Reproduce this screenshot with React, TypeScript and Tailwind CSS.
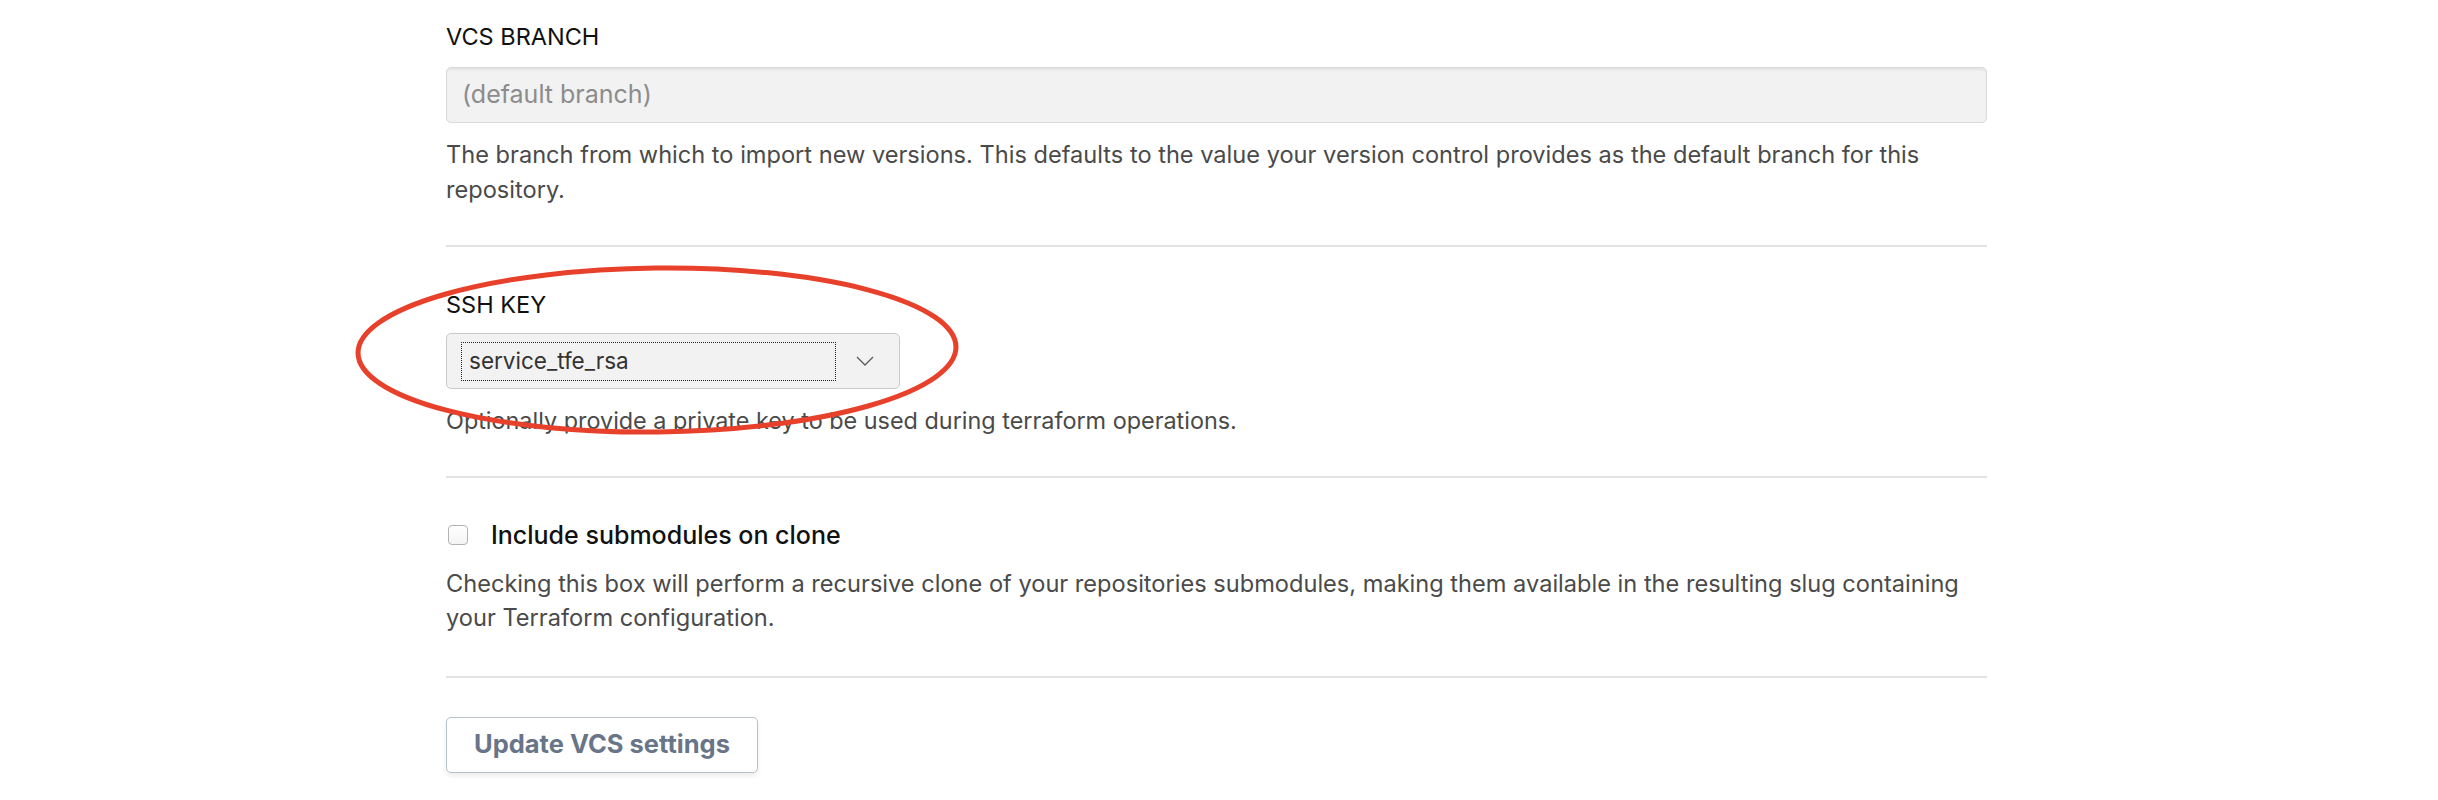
import React from 'react';

const font = { fontFamily: 'Inter, "Noto Sans", sans-serif' };

const Chevron = () => (
  <svg width="18" height="10" viewBox="0 0 18 10" fill="none">
    <path d="M1 1l8 8 8-8" stroke="#5a5a5a" strokeWidth="1.3" />
  </svg>
);

const App = () => {
  return (
    <div className="min-h-[800px] bg-white" style={font}>
      <div className="relative ml-[446px] w-[1541px]">
        {/* VCS branch */}
        <section className="pt-[21px] pb-[38px] border-b-2 border-[#e3e3e3]">
          <label className="block text-[23.5px] leading-[32px] text-[#111] uppercase mb-[14px]">VCS Branch</label>
          <div className="h-[56px] flex items-center px-[15px] bg-[#f2f2f2] border border-[#dadada] rounded-[5px] shadow-[inset_0_2px_2px_rgba(0,0,0,0.06)] text-[25px] text-[#8c8c8c]">
            (default branch)
          </div>
          <p className="mt-[15px] text-[23.6px] leading-[34.5px] text-[#4a4a4a]">
            The branch from which to import new versions. This defaults to the value your version control provides as the default branch for this repository.
          </p>
        </section>

        {/* SSH key */}
        <section className="pt-[42px] pb-[37px] border-b-2 border-[#e3e3e3]">
          <label className="block text-[23.5px] leading-[32px] text-[#111] uppercase mb-[12px]">SSH Key</label>
          <div className="w-[454px] h-[56px] flex items-center pl-[14px] pr-[25px] bg-[#f2f2f2] border border-[#c9c9c9] rounded-[5px]">
            <div className="w-[375px] h-[39px] flex items-center pl-[7px] border border-dotted border-[#222] text-[22.5px] text-[#333]">
              service_tfe_rsa
            </div>
            <div className="ml-auto flex items-center">
              <Chevron />
            </div>
          </div>
          <p className="mt-[15px] text-[23.4px] leading-[34.5px] text-[#4a4a4a]">
            Optionally provide a private key to be used during terraform operations.
          </p>
        </section>

        {/* Submodules */}
        <section className="pt-[41px] pb-[40px] border-b-2 border-[#e3e3e3]">
          <label className="flex items-center gap-[23px] text-[25px] leading-[32px] font-medium text-[#111]">
            <span className="ml-[2px] w-[20px] h-[20px] rounded-[4px] border border-[#b3b3b3] bg-gradient-to-b from-white to-[#f4f4f4]" />
            Include submodules on clone
          </label>
          <p className="mt-[16px] text-[23.6px] leading-[34.5px] text-[#4a4a4a]">
            Checking this box will perform a recursive clone of your repositories submodules, making them available in the resulting slug containing your Terraform configuration.
          </p>
        </section>

        <div className="pt-[39px]">
          <button className="h-[56px] px-[27px] bg-white border border-[#b9c1cd] rounded-[5px] shadow-[0_3px_5px_rgba(0,0,0,0.08)] text-[25.5px] font-bold text-[#687588]">
            Update VCS settings
          </button>
        </div>

        {/* annotation */}
        <svg className="absolute left-[-97px] top-[264px] pointer-events-none" width="616" height="176" viewBox="0 0 616 176" fill="none">
          <ellipse cx="308" cy="86" rx="299" ry="82" stroke="#e8412b" strokeWidth="5" transform="rotate(-0.6 308 86)" />
        </svg>
      </div>
    </div>
  );
};

export default App;
